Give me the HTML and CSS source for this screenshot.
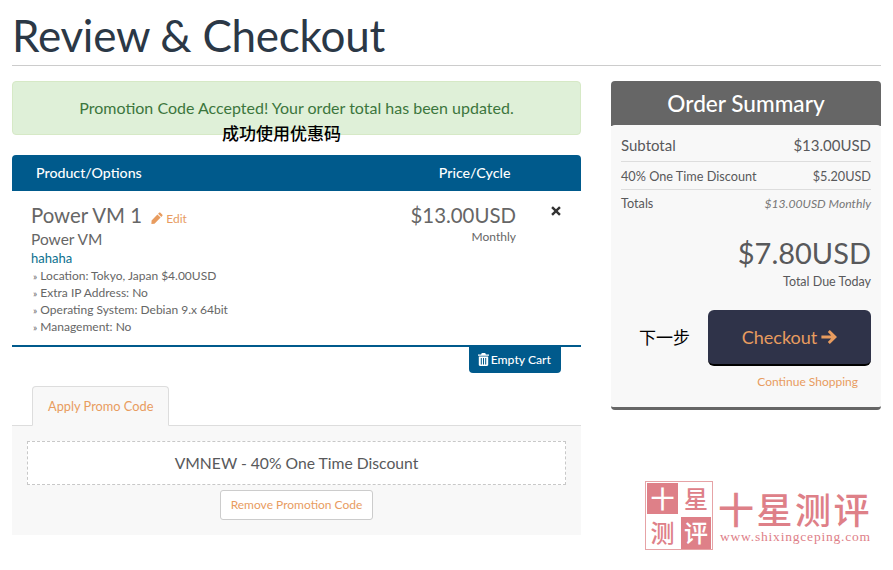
FILE: index.html
```html
<!DOCTYPE html>
<html lang="zh-CN">
<head>
    <meta charset="UTF-8">
    <meta name="viewport" content="width=device-width, initial-scale=1.0">
    <title>Review &amp; Checkout</title>
    <link rel="stylesheet" href="styles.css">
</head>
<body>
    <div class="page">
        <h1 class="page-title">Review &amp; Checkout</h1>

        <div class="columns">
            <!-- Left column -->
            <div class="cart">
                <div class="alert">Promotion Code Accepted! Your order total has been updated.</div>

                <div class="cart-head">
                    <span>Product/Options</span>
                    <span class="cart-head-price">Price/Cycle</span>
                </div>

                <div class="item">
                    <div class="item-info">
                        <div class="item-title">Power VM 1
                            <a class="edit-link">
                                <svg class="icon-pencil" viewBox="0 0 12 12"><path d="M9.2.6l2.2 2.2c.3.3.3.7 0 1L10.300 4.900 7.100 1.700 8.200.6c.3-.3.7-.3 1 0zM6.400 2.400l3.200 3.200L3.500 11.700.4 12l.2-3.500z"/></svg>
                                Edit</a>
                        </div>
                        <div class="item-group">Power VM</div>
                        <div class="item-domain">hahaha</div>
                        <div class="item-option"><span class="raquo">»</span> Location: Tokyo, Japan $4.00USD</div>
                        <div class="item-option"><span class="raquo">»</span> Extra IP Address: No</div>
                        <div class="item-option"><span class="raquo">»</span> Operating System: Debian 9.x 64bit</div>
                        <div class="item-option"><span class="raquo">»</span> Management: No</div>
                    </div>
                    <div class="item-price">
                        <div class="item-amount">$13.00USD</div>
                        <div class="item-cycle">Monthly</div>
                    </div>
                    <div class="item-remove">
                        <svg class="icon-times" viewBox="0 0 10 10"><path d="M1.900.2L5 3.300 8.100.2l1.700 1.700L6.700 5l3.100 3.100-1.700 1.700L5 6.700 1.900 9.800.2 8.100 3.300 5 .2 1.900z"/></svg>
                    </div>
                </div>

                <div class="cart-actions">
                    <a class="btn-empty">
                        <svg class="icon-trash" viewBox="0 0 11 13"><path d="M3.800 0h3.400l.7 1.400H11v1.300H0V1.400h3.100zM.8 3.500h9.400v8.300c0 .7-.5 1.200-1.200 1.200H2c-.7 0-1.200-.5-1.200-1.200zm2 1.500v6.500h1V5zm2.200 0v6.500h1V5zm2.200 0v6.500h1V5z"/></svg>
                        Empty Cart</a>
                </div>

                <div class="tabs">
                    <a class="tab">Apply Promo Code</a>
                </div>
                <div class="tab-panel">
                    <div class="promo-box">VMNEW - 40% One Time Discount</div>
                    <a class="btn-remove">Remove Promotion Code</a>
                </div>
            </div>

            <!-- Right column -->
            <div class="summary">
                <div class="summary-head">Order Summary</div>
                <div class="summary-body">
                    <div class="summary-row summary-sub">
                        <span>Subtotal</span><span>$13.00USD</span>
                    </div>
                    <div class="summary-row summary-discount">
                        <span>40% One Time Discount</span><span>$5.20USD</span>
                    </div>
                    <div class="summary-row summary-totals">
                        <span>Totals</span><em>$13.00USD Monthly</em>
                    </div>
                    <div class="total-due">
                        <div class="total-amount">$7.80USD</div>
                        <div class="total-label">Total Due Today</div>
                    </div>
                    <div class="checkout-row">
                        <a class="btn-checkout">Checkout
                            <svg class="icon-arrow" viewBox="0 0 16 14"><path d="M8.800 0L16 7l-7.200 7-2-2 3.400-3.400H.4V5.400h9.800L6.800 2z"/></svg>
                        </a>
                    </div>
                    <a class="continue-link">Continue Shopping</a>
                </div>
            </div>
        </div>
    </div>

    <!-- Notes written over the screenshot -->
    <div class="note note-promo">成功使用优惠码</div>
    <div class="note note-next">下一步</div>

    <!-- Watermark -->
    <div class="watermark">
        <div class="seal">
            <span class="seal-on">十</span>
            <span>星</span>
            <span>测</span>
            <span class="seal-on">评</span>
        </div>
        <div class="mark-text">
            <div class="mark-name">十星测评</div>
            <div class="mark-url">www.shixingceping.com</div>
        </div>
    </div>
</body>
</html>
```

FILE: styles.css
```css
/* General */
* {
    box-sizing: border-box;
}

html, body {
    margin: 0;
    padding: 0;
    background-color: #ffffff;
    font-family: Lato, "Liberation Sans", sans-serif;
    color: #58595b;
}

.page {
    padding: 0 12px;
}

.page-title {
    margin: 0;
    height: 66px;
    line-height: 70px;
    font-size: 44px;
    font-weight: 400;
    letter-spacing: -0.25px;
    color: #2b3846;
    border-bottom: 1px solid #cccccc;
}

.columns {
    display: flex;
    gap: 30px;
    margin-top: 15px;
}

/* Cart */
.cart {
    width: 569px;
}

.alert {
    height: 54px;
    line-height: 52px;
    text-align: center;
    font-size: 16px;
    color: #3c763d;
    background-color: #dff0d8;
    border: 1px solid #d6e9c6;
    border-radius: 4px;
}

.cart-head {
    display: flex;
    margin-top: 20px;
    height: 36px;
    line-height: 36px;
    padding-left: 24px;
    font-size: 14.2px;
    font-weight: 500;
    color: #ffffff;
    background-color: #005a8c;
    border-radius: 4px 4px 0 0;
}

.cart-head-price {
    margin-left: 297px;
}

.item {
    display: flex;
    height: 156px;
    border-bottom: 2px solid #005a8c;
}

.item-info {
    width: 340px;
    padding-left: 19px;
    padding-top: 12px;
}

.item-title {
    font-size: 20.4px;
    line-height: 24px;
    color: #666666;
}

.edit-link {
    margin-left: 4px;
    font-size: 12px;
    color: #e89c5f;
}

.icon-pencil {
    width: 12px;
    height: 12px;
    fill: #e89c5f;
    vertical-align: -1px;
}

.item-group {
    margin-top: -2px;
    font-size: 15.5px;
    line-height: 21px;
    color: #666666;
}

.item-domain {
    font-size: 13px;
    line-height: 17px;
    color: #0a6f8e;
}

.item-option {
    padding-left: 2px;
    font-size: 12px;
    line-height: 17px;
    color: #666666;
}

.raquo {
    line-height: 0;
    font-size: 10px;
}

.item-price {
    width: 164px;
    padding-top: 12px;
    text-align: right;
}

.item-amount {
    font-size: 20.4px;
    line-height: 24px;
    color: #666666;
}

.item-cycle {
    margin-top: 3px;
    font-size: 12px;
    line-height: 14px;
    color: #666666;
}

.item-remove {
    padding: 15px 0 0 35px;
}

.icon-times {
    display: block;
    width: 10px;
    height: 10px;
    fill: #333333;
}

.cart-actions {
    display: flex;
    justify-content: flex-end;
    padding-right: 20px;
}

.btn-empty {
    display: flex;
    align-items: center;
    gap: 2px;
    height: 26px;
    padding: 0 10px 2px 9px;
    font-size: 12.2px;
    font-weight: 500;
    color: #ffffff;
    background-color: #005a8c;
    border-radius: 0 0 4px 4px;
}

.icon-trash {
    width: 11px;
    height: 13px;
    fill: #ffffff;
}

/* Promo tabs */
.tabs {
    display: flex;
    margin-top: 13px;
    padding-left: 20px;
    border-bottom: 1px solid #dddddd;
}

.tab {
    margin-bottom: -1px;
    padding: 0 15px;
    height: 40px;
    line-height: 39px;
    font-size: 12.8px;
    color: #e89c5f;
    background-color: #f8f8f8;
    border: 1px solid #dddddd;
    border-bottom-color: #f8f8f8;
    border-radius: 4px 4px 0 0;
}

.tab-panel {
    display: flex;
    flex-direction: column;
    align-items: center;
    height: 109px;
    padding: 15px;
    background-color: #f8f8f8;
}

.promo-box {
    align-self: stretch;
    height: 44px;
    line-height: 43px;
    text-align: center;
    font-size: 15.7px;
    color: #58595b;
    background-color: #ffffff;
    border: 1px dashed #c8c8c8;
}

.btn-remove {
    margin-top: 5px;
    padding: 0 10px;
    height: 30px;
    line-height: 28px;
    font-size: 12px;
    color: #e89c5f;
    background-color: #ffffff;
    border: 1px solid #cccccc;
    border-radius: 3px;
}

/* Order summary */
.summary {
    width: 270px;
}

.summary-head {
    height: 45px;
    line-height: 45px;
    text-align: center;
    font-size: 22.6px;
    font-weight: 500;
    color: #ffffff;
    background-color: #666666;
    border-radius: 4px 4px 0 0;
}

.summary-body {
    height: 285px;
    margin-top: -1px;
    padding: 0 10px;
    background-color: #f8f8f8;
    border-bottom: 3px solid #666666;
    border-radius: 4px;
}

.summary-row {
    display: flex;
    justify-content: space-between;
    align-items: center;
}

.summary-sub {
    height: 37px;
    padding-top: 3px;
    font-size: 15px;
    border-bottom: 1px solid #dddddd;
}

.summary-discount {
    height: 28px;
    font-size: 12.7px;
    border-bottom: 1px solid #dddddd;
}

.summary-totals {
    height: 26px;
    font-size: 12.7px;
}

.summary-totals em {
    font-size: 12.2px;
    color: #777777;
}

.total-due {
    margin-top: 19px;
    text-align: right;
}

.total-amount {
    font-size: 29px;
    line-height: 36px;
    color: #58595b;
}

.total-label {
    margin-top: 3px;
    font-size: 12.5px;
    line-height: 16px;
    font-weight: 400;
}

.checkout-row {
    display: flex;
    justify-content: flex-end;
    margin-top: 20px;
}

.btn-checkout {
    display: flex;
    align-items: center;
    justify-content: center;
    gap: 4px;
    width: 163px;
    height: 56px;
    font-size: 18px;
    color: #e89c5f;
    background-color: #2f3349;
    border-bottom: 2px solid #000000;
    border-radius: 6px;
}

.icon-arrow {
    width: 16px;
    height: 14px;
    fill: #e89c5f;
}

.continue-link {
    display: block;
    margin-top: 8px;
    padding-right: 13px;
    text-align: right;
    font-size: 12px;
    color: #e89c5f;
}

/* Notes over the screenshot */
.note {
    position: absolute;
    font-family: "Noto Sans CJK SC", sans-serif;
    font-size: 17px;
    line-height: 20px;
    color: #000000;
}

.note-promo {
    left: 222px;
    top: 123px;
    font-weight: 500;
}

.note-next {
    left: 639px;
    top: 327px;
}

/* Watermark */
.watermark {
    position: absolute;
    left: 645px;
    top: 481px;
    display: flex;
    gap: 5px;
    color: #de8088;
}

.seal {
    display: grid;
    grid-template-columns: 31px 30px;
    grid-template-rows: 31px 32px;
    gap: 3px;
    padding: 1px;
    width: 68px;
    height: 69px;
    border: 1px solid #e6a3a6;
    font-family: "Noto Sans CJK SC", sans-serif;
    font-size: 24px;
    font-weight: 500;
    line-height: 30px;
    text-align: center;
}

.seal-on {
    color: #ffffff;
    background-color: #de8088;
}

.mark-text {
    padding-top: 7px;
}

.mark-name {
    font-family: "Noto Sans CJK SC", sans-serif;
    font-size: 36px;
    font-weight: 500;
    line-height: 40px;
    letter-spacing: 2.5px;
}

.mark-url {
    margin-top: 1px;
    padding-left: 2px;
    font-family: "Liberation Serif", serif;
    font-size: 13.5px;
    line-height: 16px;
    letter-spacing: 0.8px;
    white-space: nowrap;
}
```
